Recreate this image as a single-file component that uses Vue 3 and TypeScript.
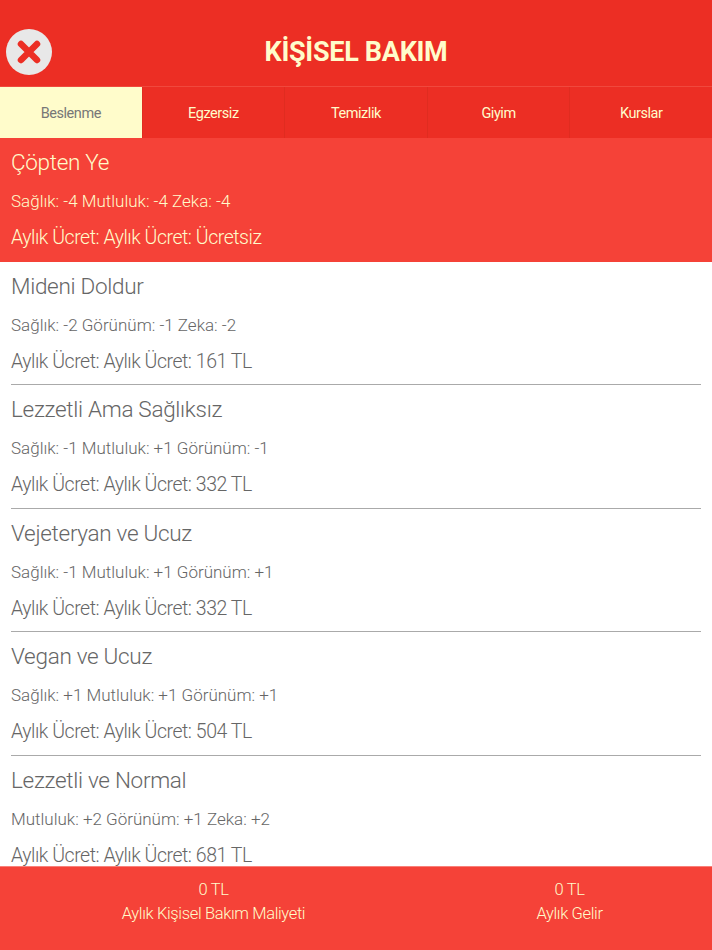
<script setup lang="ts">
interface Item { name: string; stats: string; cost: string }
const tabs: string[] = ['Beslenme', 'Egzersiz', 'Temizlik', 'Giyim', 'Kurslar']
const items: Item[] = [
  { name: 'Çöpten Ye', stats: 'Sağlık: -4 Mutluluk: -4 Zeka: -4', cost: 'Ücretsiz' },
  { name: 'Mideni Doldur', stats: 'Sağlık: -2 Görünüm: -1 Zeka: -2', cost: '161 TL' },
  { name: 'Lezzetli Ama Sağlıksız', stats: 'Sağlık: -1 Mutluluk: +1 Görünüm: -1', cost: '332 TL' },
  { name: 'Vejeteryan ve Ucuz', stats: 'Sağlık: -1 Mutluluk: +1 Görünüm: +1', cost: '332 TL' },
  { name: 'Vegan ve Ucuz', stats: 'Sağlık: +1 Mutluluk: +1 Görünüm: +1', cost: '504 TL' },
  { name: 'Lezzetli ve Normal', stats: 'Mutluluk: +2 Görünüm: +1 Zeka: +2', cost: '681 TL' },
]
</script>

<template>
  <div class="page">
    <header class="header">
      <button class="close" aria-label="Kapat">
        <svg width="26" height="26" viewBox="0 0 26 26">
          <path d="M5 5 L21 21 M21 5 L5 21" stroke="#ec2e24" stroke-width="6.5" stroke-linecap="round" fill="none" />
        </svg>
      </button>
      <h1 class="title">KİŞİSEL BAKIM</h1>
    </header>
    <nav class="tabs">
      <div v-for="(t, i) in tabs" :key="t" class="tab" :class="{ active: i === 0 }">{{ t }}</div>
    </nav>
    <main class="list">
      <section v-for="(it, i) in items" :key="it.name" class="item" :class="{ selected: i === 0 }">
        <div class="inner">
          <div class="name">{{ it.name }}</div>
          <div class="stats">{{ it.stats }}</div>
          <div class="cost">Aylık Ücret: Aylık Ücret: {{ it.cost }}</div>
        </div>
      </section>
    </main>
    <footer class="footer">
      <div class="sum"><div>0 TL</div><div>Aylık Kişisel Bakım Maliyeti</div></div>
      <div class="sum income"><div>0 TL</div><div>Aylık Gelir</div></div>
    </footer>
  </div>
</template>

<style scoped>
.page {
  width: 712px;
  height: 950px;
  display: flex;
  flex-direction: column;
  overflow: hidden;
  background: #fff;
  font-family: "Roboto", "Noto Sans", sans-serif;
  font-weight: 300;
  color: #666;
}
.header {
  position: relative;
  height: 86px;
  flex: none;
  background: #ec2e24;
  display: flex;
  align-items: center;
  justify-content: center;
}
.close {
  position: absolute;
  left: 6px;
  top: 29px;
  width: 46px;
  height: 46px;
  border: 0;
  padding: 0;
  border-radius: 50%;
  background: #e8e8e8;
  display: flex;
  align-items: center;
  justify-content: center;
}
.title {
  margin: 17px 0 0;
  font-size: 27px;
  font-weight: 700;
  letter-spacing: -0.3px;
  color: #fffccb;
  line-height: 34px;
}
.tabs {
  height: 52px;
  flex: none;
  display: flex;
  background: #ec2e24;
  border-top: 1px solid #f0493d;
  box-sizing: border-box;
}
.tab {
  flex: 1;
  display: flex;
  align-items: center;
  justify-content: center;
  padding-top: 2px;
  font-size: 14.5px;
  font-weight: 400;
  letter-spacing: -0.45px;
  color: #fffccb;
  border-left: 1px solid #e02c20;
}
.tab:first-child { border-left: 0; }
.tab.active {
  background: #fffccb;
  color: #777;
}
.list {
  flex: 1;
  min-height: 0;
  overflow: hidden;
}
.item.selected {
  background: #f54238;
  color: #fffccb;
}
.inner {
  margin: 0 11px;
  height: 123.5px;
  box-sizing: border-box;
  border-bottom: 1px solid #aaa;
  display: flex;
  flex-direction: column;
}
.selected .inner { border-bottom-color: transparent; }
.name {
  height: 50px;
  line-height: 49px;
  font-size: 22.5px;
  letter-spacing: -0.3px;
}
.stats {
  height: 28px;
  line-height: 26px;
  font-size: 17px;
}
.cost {
  height: 44px;
  line-height: 44px;
  font-size: 19.5px;
  letter-spacing: -0.47px;
}
.footer {
  height: 84px;
  flex: none;
  background: #f54238;
  border-top: 1px solid #f98079;
  box-sizing: border-box;
  color: #fffccb;
  display: flex;
  padding-top: 11px;
  font-size: 16.5px;
  letter-spacing: -0.35px;
  line-height: 24px;
  text-align: center;
}
.sum { width: 427px; }
.income { width: 285px; }
</style>
